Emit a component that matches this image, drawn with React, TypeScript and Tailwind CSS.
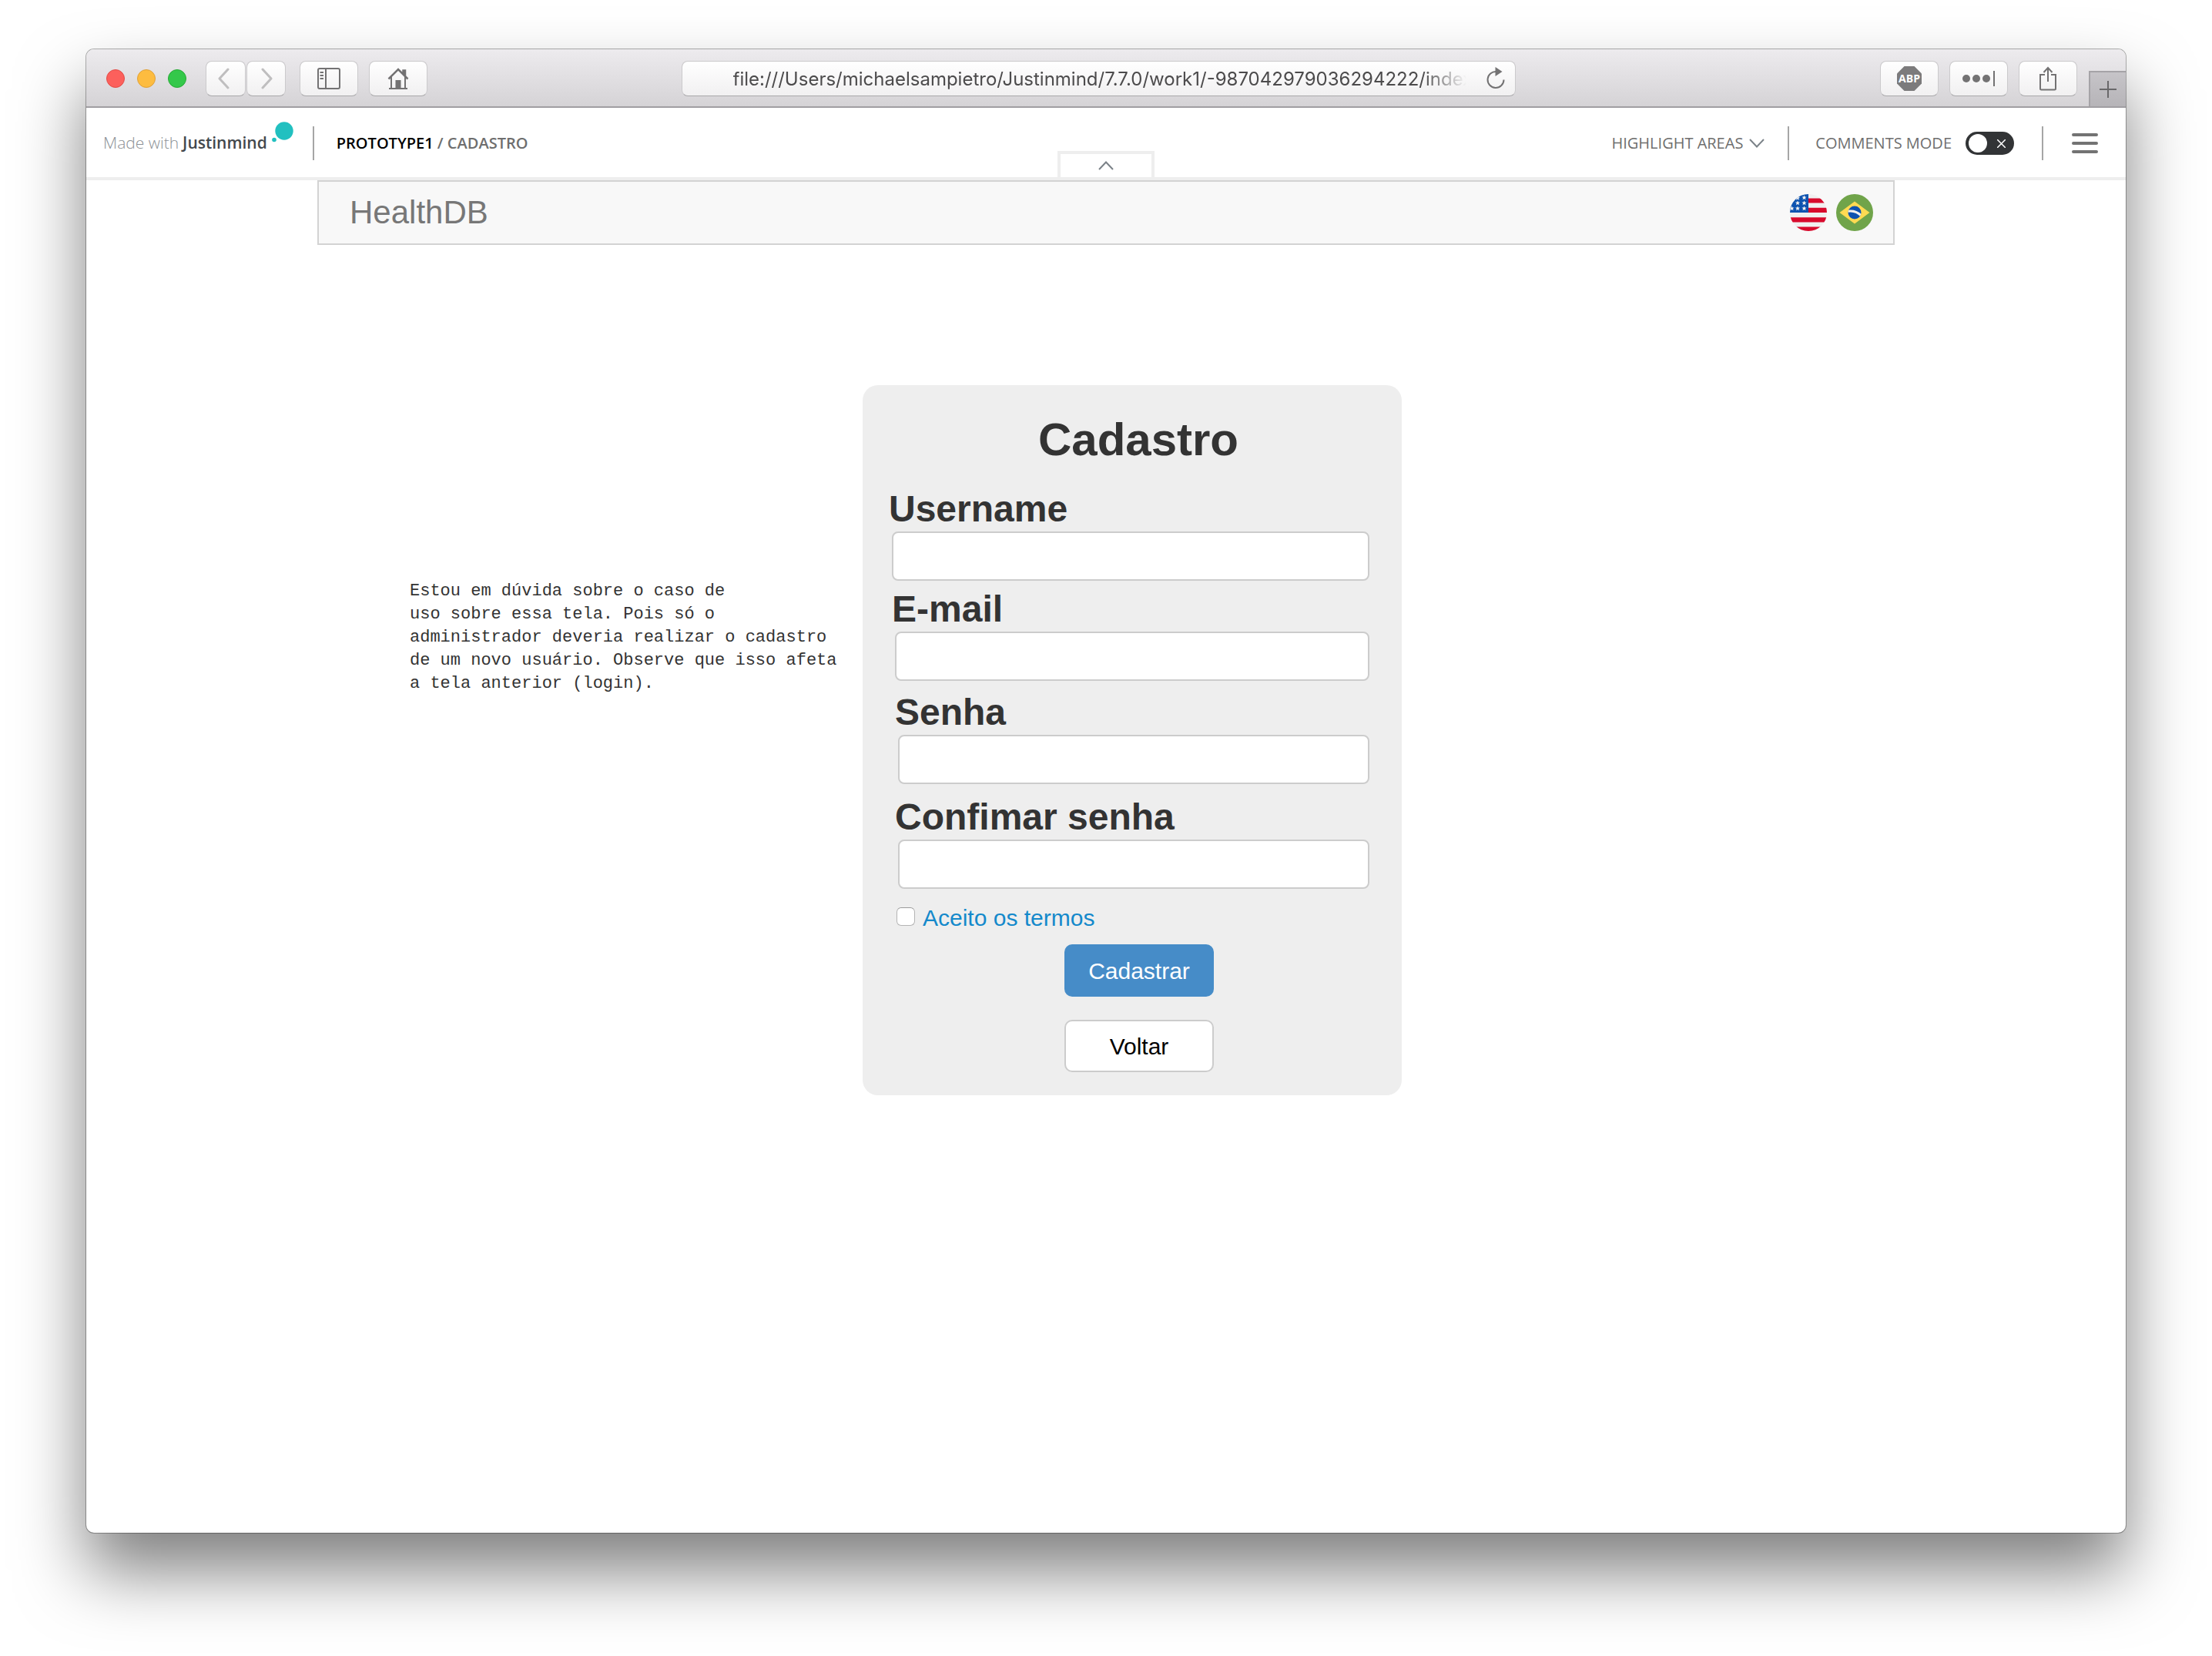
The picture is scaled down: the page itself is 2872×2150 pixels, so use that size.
import type { ReactNode } from "react";

const toolButton =
  "flex h-[46px] items-center justify-center rounded-lg border border-[#cbcacc] border-b-[#a9a8aa] bg-linear-to-b from-white to-[#f1f0f1]";

function ToolButton({ label, className, children }: { label: string; className: string; children: ReactNode }) {
  return (
    <button type="button" aria-label={label} className={`${toolButton} ${className}`}>
      {children}
    </button>
  );
}

function BrowserBar() {
  return (
    <div className="flex h-[76px] items-end border-b-2 border-[#a09ea2] bg-linear-to-b from-[#edebee] to-[#d5d3d6]">
      <div className="flex flex-1 items-center self-start pt-[15px] pl-[26px]">
        <div className="flex gap-4">
          <span className="size-6 rounded-full border border-[#e24b46] bg-[#fc605c]" />
          <span className="size-6 rounded-full border border-[#dfa038] bg-[#fdbc40]" />
          <span className="size-6 rounded-full border border-[#27aa35] bg-[#34c84a]" />
        </div>
        <div className="ml-[25px] flex gap-px">
          <ToolButton label="Back" className="w-[52px]">
            <svg width="16" height="28" viewBox="0 0 16 28" fill="none" stroke="#bfbebf" strokeWidth="3" strokeLinecap="round" strokeLinejoin="round" className="mr-1">
              <path d="M13 2 2 14l11 12" />
            </svg>
          </ToolButton>
          <ToolButton label="Forward" className="w-[51px]">
            <svg width="16" height="28" viewBox="0 0 16 28" fill="none" stroke="#bfbebf" strokeWidth="3" strokeLinecap="round" strokeLinejoin="round">
              <path d="m3 2 11 12L3 26" />
            </svg>
          </ToolButton>
        </div>
        <ToolButton label="Show sidebar" className="ml-[18px] w-[76px]">
          <svg width="30" height="28" viewBox="0 0 30 28" fill="none" stroke="#737273" strokeWidth="2">
            <rect x="1" y="1" width="28" height="26" rx="2" />
            <path d="M11 1v26M3.500 6h4.500M3.500 10h4.500M3.500 14h4.500" />
          </svg>
        </ToolButton>
        <ToolButton label="Home" className="ml-[14px] w-[76px]">
          <svg width="28" height="30" viewBox="0 0 28 30" fill="none" stroke="#737273" strokeWidth="2">
            <path d="M1.500 15.500 14 3l12.500 12.500M20.500 9V4.500h2.500V12" strokeWidth="2.500" />
            <path d="M5 13v14.500M23 13v14.500M2 28h24" />
            <path d="M10.500 17h7v11h-7z" fill="#737273" stroke="none" />
          </svg>
        </ToolButton>
      </div>
      <div className="mt-[15px] mr-[46px] flex h-[46px] w-[1083px] items-center self-start rounded-lg border border-[#cbcacc] border-b-[#a9a8aa] bg-linear-to-b from-white to-[#f1f0f1] pr-3 pl-[66px]">
        <input
          aria-label="Address"
          readOnly
          value="file:///Users/michaelsampietro/Justinmind/7.7.0/work1/-987042979036294222/index.html"
          className="w-[952px] bg-transparent mask-[linear-gradient(to_right,black_94%,transparent)] pt-0.5 font-['Inter',sans-serif] text-[24px] text-[#4c4b4c] outline-none"
        />
        <button type="button" aria-label="Reload" className="ml-auto">
          <svg width="26" height="32" viewBox="0 0 26 32" fill="none" stroke="#737273" strokeWidth="2">
            <path d="M23.500 17.500A10.500 10.500 0 1 1 14 7" />
            <path d="m12.500 1 9 6-9 6z" fill="#737273" stroke="none" />
          </svg>
        </button>
      </div>
      <div className="flex flex-1 items-end justify-end self-stretch">
        <div className="mr-[15px] flex gap-[14px] self-start pt-[15px]">
          <ToolButton label="Adblock Plus" className="w-[76px]">
            <svg width="32" height="32" viewBox="0 0 32 32">
              <path d="M9.500 0h13L32 9.500v13L22.500 32h-13L0 22.500v-13z" fill="#7c7b7c" />
              <text x="16" y="21" textAnchor="middle" fill="white" className="font-['Open_Sans',sans-serif] text-[14px] font-bold">
                ABP
              </text>
            </svg>
          </ToolButton>
          <ToolButton label="Passwords" className="w-[76px]">
            <svg width="42" height="22" viewBox="0 0 42 22" fill="#737273">
              <circle cx="5" cy="11" r="5" />
              <circle cx="18" cy="11" r="5" />
              <circle cx="31" cy="11" r="5" />
              <path d="M40 1h2v20h-2z" />
            </svg>
          </ToolButton>
          <ToolButton label="Share" className="w-[76px]">
            <svg width="24" height="32" viewBox="0 0 24 32" fill="none" stroke="#737273" strokeWidth="2">
              <path d="M8 11H2v18q0 1.500 1.500 1.500h17q1.500 0 1.500-1.500V11h-6M12 20V2M6.500 8 12 2l5.500 6" />
            </svg>
          </ToolButton>
        </div>
        <button type="button" aria-label="New tab" className="flex h-[46px] w-12 items-center justify-center border-t-2 border-l-2 border-[#a5a3a7] bg-linear-to-b from-[#c6c4c8] to-[#b6b4b8]">
          <svg width="22" height="22" viewBox="0 0 22 22" stroke="#69686a" strokeWidth="2">
            <path d="M11 0v22M0 11h22" />
          </svg>
        </button>
      </div>
    </div>
  );
}

function Divider({ className }: { className: string }) {
  return <div className={`h-11 w-0.5 bg-[#a6a6a6] ${className}`} />;
}

function PrototypeHeader() {
  return (
    <header className="relative flex h-[94px] items-center border-b-4 border-[#eeeeee] pt-0.5 pr-9 pl-[22px] font-['Open_Sans',sans-serif] text-[20px] text-[#6e6e6e]">
      <a href="#justinmind" className="flex items-center text-[21px]">
        <span className="font-light text-[#8c9196]">Made with</span>
        <span className="ml-[5px] font-semibold text-[#43484d]">Justinmind</span>
        <svg width="28" height="56" viewBox="0 0 28 56" fill="#22c0c0" className="ml-1.5">
          <circle cx="16" cy="12" r="11.700" />
          <circle cx="3" cy="23.500" r="2.800" />
        </svg>
      </a>
      <Divider className="ml-[25px]" />
      <p className="ml-[29px] font-semibold">
        <span className="text-black">PROTOTYPE1</span> / CADASTRO
      </p>
      <div className="ml-auto flex items-center">
        <button type="button" className="flex items-center gap-2">
          HIGHLIGHT AREAS
          <svg width="20" height="12" viewBox="0 0 20 12" fill="none" stroke="#7b8288" strokeWidth="2">
            <path d="m1 1 9 9.500L19 1" />
          </svg>
        </button>
        <Divider className="mr-[34px] ml-[30px]" />
        <label className="flex items-center gap-[18px]">
          COMMENTS MODE
          <span className="flex h-[30px] w-[63px] items-center justify-between rounded-full bg-[#323436] pr-[11px] pl-[4px]">
            <input type="checkbox" className="size-6 appearance-none rounded-full bg-white" />
            <svg width="11" height="11" viewBox="0 0 11 11" stroke="white" strokeWidth="1.500">
              <path d="m0 0 11 11M11 0 0 11" />
            </svg>
          </span>
        </label>
        <Divider className="mr-[37px] ml-[36px]" />
        <button type="button" aria-label="Menu">
          <svg width="34" height="26" viewBox="0 0 34 26" stroke="#737373" strokeWidth="4" strokeLinecap="round">
            <path d="M2 2h30M2 13h30M2 24h30" />
          </svg>
        </button>
      </div>
      <button
        type="button"
        aria-label="Collapse header"
        className="absolute bottom-0 left-1/2 flex h-[34px] w-[126px] -translate-x-1/2 items-center justify-center border-x-4 border-t-4 border-[#eeeeee]"
      >
        <svg width="20" height="12" viewBox="0 0 20 12" fill="none" stroke="#7b8288" strokeWidth="2">
          <path d="m1 11 9-9.500 9 9.500" />
        </svg>
      </button>
    </header>
  );
}

const star = "M0-3 .9-1h2.100L1.400.400 2 2.700 0 1.400-2 2.700-1.400.400-3-1h2.100z";
const stars: [number, number][] = [
  [18.5, 4.5],
  [10, 5],
  [18.5, 11.5],
  [10, 11.5],
  [2.5, 18.5],
  [10, 18.5],
  [18.5, 18.5],
];

function UsFlag() {
  return (
    <svg width="48" height="48" viewBox="0 0 48 48">
      <clipPath id="us-round">
        <circle cx="24" cy="24" r="24" />
      </clipPath>
      <g clipPath="url(#us-round)">
        <path d="M0 0h48v48H0z" fill="#f0f0f0" />
        <path d="M24 5.500h24v6H24zM24 17.800h24V24H24zM0 30.300h48v6.200H0zM0 42.500h48V48H0z" fill="#d80a2c" />
        <path d="M0 0h24v24H0z" fill="#0d53b0" />
        {stars.map(([x, y]) => (
          <path key={`${x}-${y}`} d={star} fill="#f0f0f0" transform={`translate(${x} ${y})`} />
        ))}
      </g>
    </svg>
  );
}

function BrazilFlag() {
  return (
    <svg width="48" height="48" viewBox="0 0 48 48">
      <clipPath id="br-globe">
        <circle cx="24" cy="24" r="8.500" />
      </clipPath>
      <circle cx="24" cy="24" r="24" fill="#70a44a" />
      <path d="M24 9.500 43.500 24 24 38.500 4.500 24z" fill="#ffda52" />
      <circle cx="24" cy="24" r="8.500" fill="#0d53b0" />
      <path d="M14 22.500q11-2.500 19 6" fill="none" stroke="#f0f0f0" strokeWidth="3" clipPath="url(#br-globe)" />
    </svg>
  );
}

function Field({ id, label, type, className }: { id: string; label: string; type: string; className: string }) {
  return (
    <div className={className}>
      <label htmlFor={id} className="block text-[48px] leading-[58px] font-bold">
        {label}
      </label>
      <div className="pl-1">
        <input id={id} type={type} className="block h-16 w-full rounded-lg border-2 border-[#cccccc] bg-white px-4 text-[30px]" />
      </div>
    </div>
  );
}

function SignUpForm() {
  return (
    <form className="flex w-[700px] flex-col rounded-[20px] bg-[#eeeeee] pt-9 pr-[42px] pb-[30px] pl-[34px] text-[#333333]">
      <h1 className="pl-6 text-center text-[60px] leading-[70px] font-bold">Cadastro</h1>
      <Field id="username" label="Username" type="text" className="mt-[26px]" />
      <Field id="email" label="E-mail" type="email" className="mt-2 pl-1" />
      <Field id="password" label="Senha" type="password" className="mt-3 pl-2" />
      <Field id="confirm" label="Confimar senha" type="password" className="mt-[14px] pl-2" />
      <label className="mt-5 flex items-start gap-[10px] pl-[10px] text-[30px] leading-9 text-[#1489cb]">
        <input type="checkbox" className="mt-1 size-6 appearance-none rounded-md border border-[#b4b4b4] border-t-[#9a9a9a] bg-white" />
        Aceito os termos
      </label>
      <div className="mt-4 flex flex-col items-center gap-[30px] pl-[26px] text-[30px]">
        <button type="submit" className="h-[68px] w-[194px] rounded-[10px] bg-[#468cc8] text-white">
          Cadastrar
        </button>
        <button type="button" className="h-[68px] w-[194px] rounded-[10px] border-2 border-[#cccccc] bg-white text-black">
          Voltar
        </button>
      </div>
    </form>
  );
}

export default function App() {
  return (
    <div className="flex min-h-screen flex-col bg-white px-28 pt-16 pb-40">
      <div className="flex flex-1 flex-col overflow-hidden rounded-[10px] bg-white shadow-[0_50px_88px_rgba(0,0,0,0.5),0_0_0_1px_rgba(0,0,0,0.3)]">
        <BrowserBar />
        <PrototypeHeader />
        <main className="mx-auto w-[2048px] max-w-full font-['Liberation_Sans',Arial,sans-serif]">
          <nav className="flex h-[84px] items-center justify-between border-2 border-[#d3d3d3] bg-[#f8f8f8] pr-[26px] pl-10">
            <a href="#home" className="pb-0.5 text-[42px] text-[#777777]">
              HealthDB
            </a>
            <div className="flex gap-3">
              <button type="button" aria-label="English">
                <UsFlag />
              </button>
              <button type="button" aria-label="Português">
                <BrazilFlag />
              </button>
            </div>
          </nav>
          <div className="flex items-start gap-6 pt-[182px] pl-[120px]">
            <p className="w-[564px] pt-[253px] font-['Liberation_Mono','Courier_New',monospace] text-[22px] leading-[30px] text-[#333333]">
              Estou em dúvida sobre o caso de
              <br />
              uso sobre essa tela. Pois só o administrador deveria realizar o cadastro de um novo usuário. Observe que isso afeta a tela anterior (login).
            </p>
            <SignUpForm />
          </div>
        </main>
      </div>
    </div>
  );
}
